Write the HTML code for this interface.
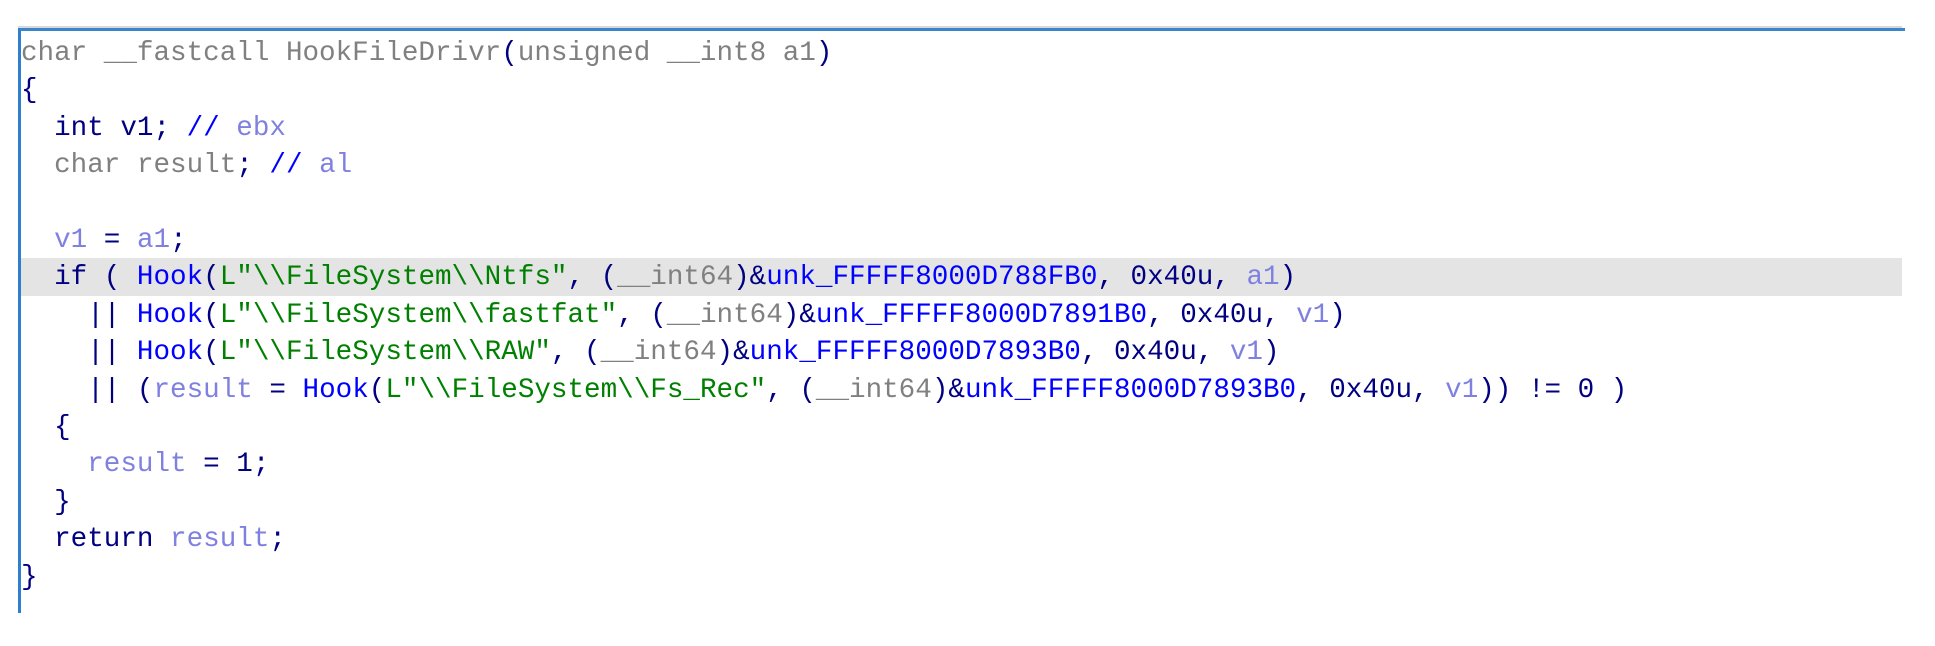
<!DOCTYPE html>
<html><head><meta charset="utf-8"><style>
html,body{margin:0;padding:0;background:#fff;width:1935px;height:646px;overflow:hidden}
.panel{position:absolute;left:18px;top:28px;width:1884px;height:582px;border-left:3px solid #2f7fd0;border-top:3px solid #3a86cc;background:#fff}
.topgray{position:absolute;left:18px;top:26px;width:1884px;height:2px;background:#d8d8d8}
pre{position:absolute;left:21px;top:35px;margin:0;font-family:"Liberation Mono",monospace;font-size:27.6px;line-height:37.4px;color:#000080}
.hl{position:absolute;left:21px;top:258px;width:1881px;height:38px;background:#e4e4e4}
.g{color:#808080}.n{color:#000080}.b{color:#0000ff}.s{color:#008000}.v{color:#8080e0}
</style></head><body>
<div class="topgray"></div>
<div class="panel"></div>
<div class="hl"></div>
<pre><span class="g">char __fastcall HookFileDrivr</span>(<span class="g">unsigned __int8 a1</span>)
{
  int v1; <span class="b">//</span> <span class="v">ebx</span>
  <span class="g">char</span> <span class="g">result</span>; <span class="b">//</span> <span class="v">al</span>

  <span class="v">v1</span> = <span class="v">a1</span>;
  if ( <span class="b">Hook</span>(<span class="s">L"\\FileSystem\\Ntfs"</span>, (<span class="g">__int64</span>)&amp;<span class="b">unk_FFFFF8000D788FB0</span>, 0x40u, <span class="v">a1</span>)
    || <span class="b">Hook</span>(<span class="s">L"\\FileSystem\\fastfat"</span>, (<span class="g">__int64</span>)&amp;<span class="b">unk_FFFFF8000D7891B0</span>, 0x40u, <span class="v">v1</span>)
    || <span class="b">Hook</span>(<span class="s">L"\\FileSystem\\RAW"</span>, (<span class="g">__int64</span>)&amp;<span class="b">unk_FFFFF8000D7893B0</span>, 0x40u, <span class="v">v1</span>)
    || (<span class="v">result</span> = <span class="b">Hook</span>(<span class="s">L"\\FileSystem\\Fs_Rec"</span>, (<span class="g">__int64</span>)&amp;<span class="b">unk_FFFFF8000D7893B0</span>, 0x40u, <span class="v">v1</span>)) != 0 )
  {
    <span class="v">result</span> = 1;
  }
  return <span class="v">result</span>;
}</pre>
</body></html>
